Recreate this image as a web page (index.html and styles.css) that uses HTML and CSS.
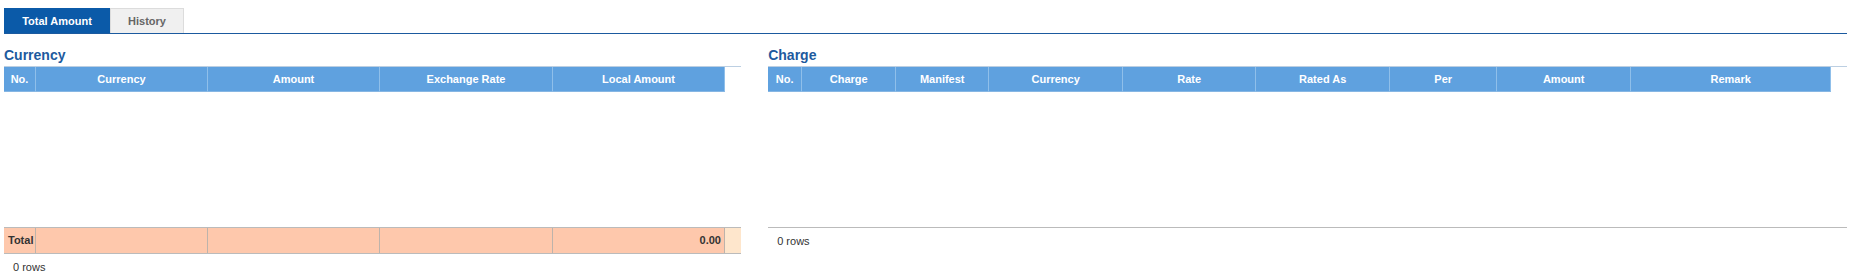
FILE: index.html
```html
<!DOCTYPE html>
<html lang="en">

<head>
    <meta charset="UTF-8">
    <title>Total Amount</title>
    <link rel="stylesheet" href="styles.css">
</head>

<body>
    <div class="page">
        <ul class="tabs">
            <li class="tab active">Total Amount</li>
            <li class="tab">History</li>
        </ul>

        <div class="panels">
            <!-- Currency grid -->
            <div class="panel panel-left">
                <h2 class="title">Currency</h2>
                <div class="grid">
                    <div class="row head cols-currency">
                        <div class="cell">No.</div>
                        <div class="cell">Currency</div>
                        <div class="cell">Amount</div>
                        <div class="cell">Exchange Rate</div>
                        <div class="cell">Local Amount</div>
                    </div>
                    <div class="body"></div>
                    <div class="row foot cols-currency-foot">
                        <div class="cell">Total</div>
                        <div class="cell"></div>
                        <div class="cell"></div>
                        <div class="cell"></div>
                        <div class="cell num">0.00</div>
                        <div class="cell filler"></div>
                    </div>
                    <div class="pager">0 rows</div>
                </div>
            </div>

            <!-- Charge grid -->
            <div class="panel panel-right">
                <h2 class="title">Charge</h2>
                <div class="grid">
                    <div class="row head cols-charge">
                        <div class="cell">No.</div>
                        <div class="cell">Charge</div>
                        <div class="cell">Manifest</div>
                        <div class="cell">Currency</div>
                        <div class="cell">Rate</div>
                        <div class="cell">Rated As</div>
                        <div class="cell">Per</div>
                        <div class="cell">Amount</div>
                        <div class="cell">Remark</div>
                    </div>
                    <div class="body"></div>
                    <div class="pager pager-line">0 rows</div>
                </div>
            </div>
        </div>
    </div>
</body>

</html>
```

FILE: styles.css
```css
* {
    padding: 0;
    margin: 0;
    box-sizing: border-box;
}

body {
    font-family: Arial, "Liberation Sans", sans-serif;
    font-size: 11px;
    color: #333;
    background: #fff;
}

.page {
    padding: 8px 4px 0;
}

/* Tabs */
.tabs {
    display: flex;
    list-style: none;
    border-bottom: 1px solid #1b5a9f;
}

.tab {
    width: 74px;
    height: 25px;
    line-height: 25px;
    text-align: center;
    font-weight: bold;
    color: #666;
    background: #f0f0f0;
    border: 1px solid #dcdcdc;
    border-bottom: none;
}

.tab.active {
    width: 106px;
    color: #fff;
    background: #0b5aa8;
    border-color: #0b5aa8;
}

/* Panels */
.panels {
    display: flex;
}

.panel-left {
    flex: 0 0 40%;
}

.panel-right {
    flex: 1;
    padding-left: 27px;
}

.title {
    padding-top: 11px;
    line-height: 21px;
    font-size: 14px;
    font-weight: bold;
    color: #1d5a9e;
}

/* Grid */
.grid {
    border-top: 1px solid #bccfe2;
}

.row {
    display: grid;
}

.cols-currency {
    grid-template-columns: 32px 172px 172px 173px 172px;
}

.cols-currency-foot {
    grid-template-columns: 32px 172px 172px 173px 172px 1fr;
}

.cols-charge {
    grid-template-columns: 34px 94px 93px 134px 133px 134px 107px 134px 200px;
}

.head {
    height: 25px;
}

.head .cell {
    line-height: 24px;
    text-align: center;
    font-weight: bold;
    color: #fff;
    background: #5fa1df;
    border-right: 1px solid #8fbfea;
    border-bottom: 1px solid #86b6e3;
    white-space: nowrap;
}

.body {
    height: 135px;
}

.foot {
    height: 27px;
    border-top: 1px solid #bbb;
    border-bottom: 1px solid #bbb;
}

.foot .cell {
    line-height: 25px;
    padding: 0 4px;
    font-weight: bold;
    background: #fec8ac;
    border-right: 1px solid #bdb3ab;
}

.foot .num {
    text-align: right;
    padding-right: 3px;
}

.foot .filler {
    background: #fee6cc;
    border-right: none;
}

.pager {
    height: 27px;
    line-height: 27px;
    padding-left: 9px;
}

.pager-line {
    border-top: 1px solid #bbb;
}
```
